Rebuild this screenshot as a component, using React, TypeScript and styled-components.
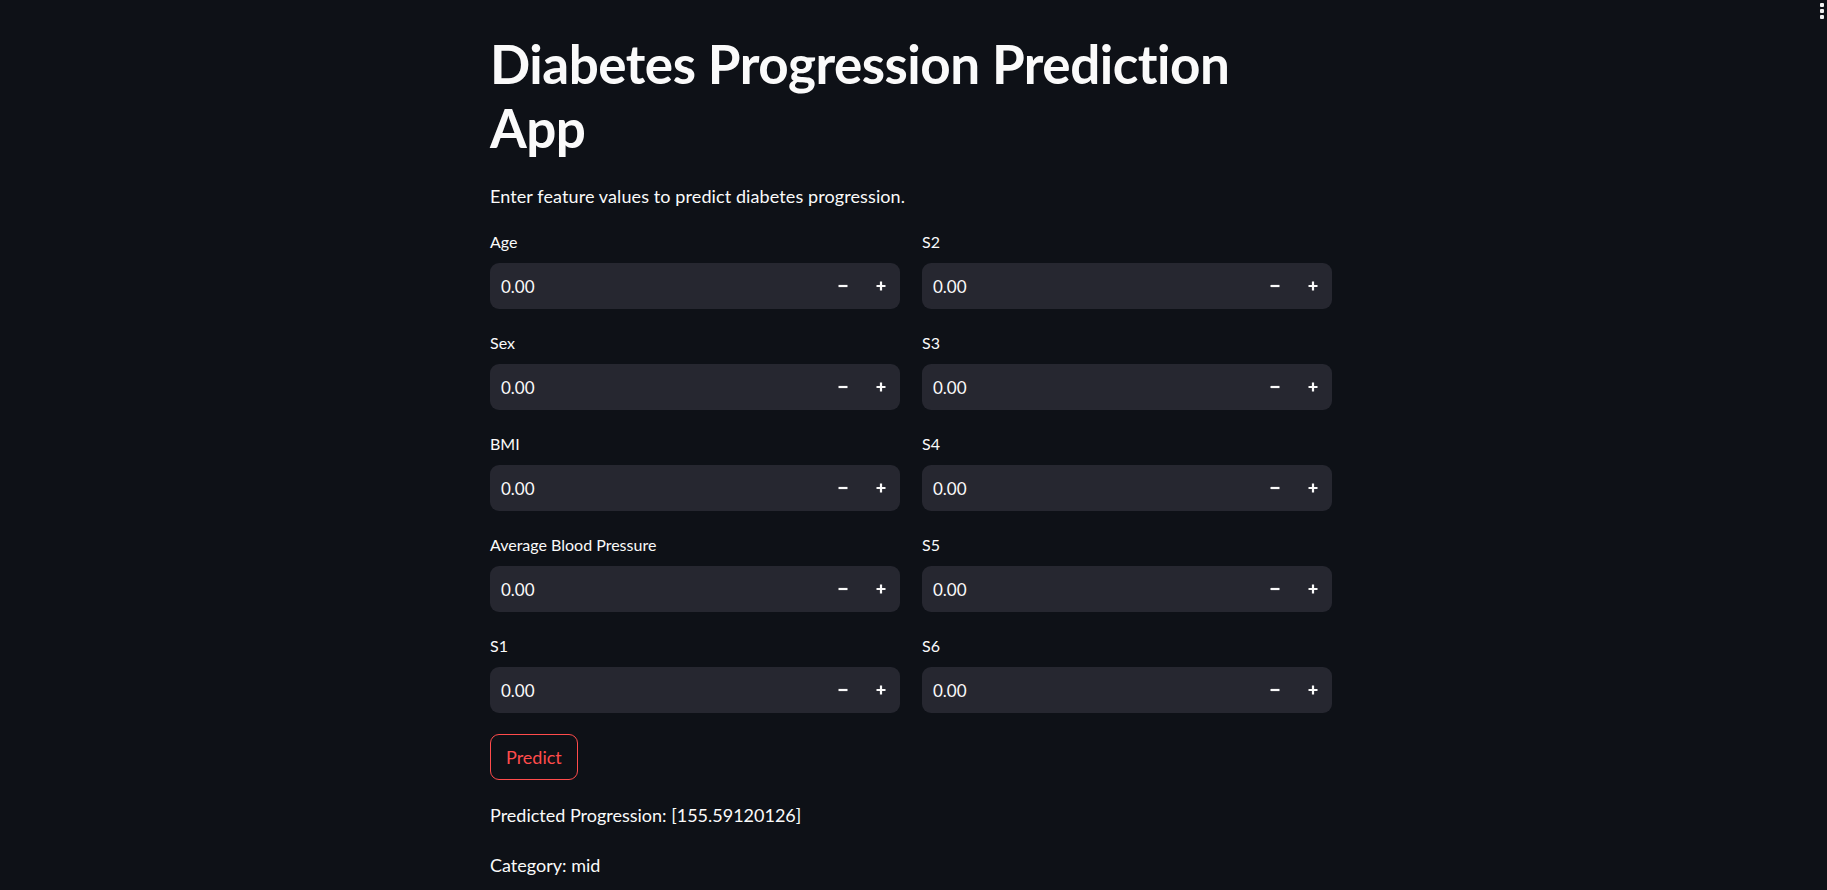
import React from "react";
import { createGlobalStyle, styled } from "styled-components";

const GlobalStyle = createGlobalStyle`
  html, body {
    margin: 0;
    padding: 0;
    background: #0e1117;
    color: #fafafa;
    font-family: "Lato", "Noto Sans", sans-serif;
  }
  * { box-sizing: border-box; }
`;

const leftFields = ["Age", "Sex", "BMI", "Average Blood Pressure", "S1"];
const rightFields = ["S2", "S3", "S4", "S5", "S6"];

const MinusIcon = () => (
  <svg width="12" height="12" viewBox="0 0 12 12">
    <path d="M1.5 6h9" stroke="#fafafa" strokeWidth="2.2" />
  </svg>
);

const PlusIcon = () => (
  <svg width="12" height="12" viewBox="0 0 12 12">
    <path d="M1.5 6h9M6 1.5v9" stroke="#fafafa" strokeWidth="2.2" />
  </svg>
);

const NumberField: React.FC<{ label: string }> = ({ label }) => (
  <Field>
    <Label>{label}</Label>
    <InputBox>
      <Value>0.00</Value>
      <StepButton aria-label="decrement">
        <MinusIcon />
      </StepButton>
      <StepButton aria-label="increment">
        <PlusIcon />
      </StepButton>
    </InputBox>
  </Field>
);

export default function App() {
  return (
    <Page>
      <GlobalStyle />
      <MenuDots aria-label="menu">
        <span />
        <span />
        <span />
      </MenuDots>
      <Main>
        <Title>
          Diabetes Progression Prediction
          <br />
          App
        </Title>
        <Text>Enter feature values to predict diabetes progression.</Text>
        <Columns>
          <Column>
            {leftFields.map((f) => (
              <NumberField key={f} label={f} />
            ))}
          </Column>
          <Column>
            {rightFields.map((f) => (
              <NumberField key={f} label={f} />
            ))}
          </Column>
        </Columns>
        <PredictButton>Predict</PredictButton>
        <Result>Predicted Progression: [155.59120126]</Result>
        <Result>Category: mid</Result>
      </Main>
    </Page>
  );
}

const Page = styled.div`
  min-height: 890px;
  background: #0e1117;
  display: flex;
  justify-content: center;
`;

const MenuDots = styled.div`
  position: absolute;
  top: 3px;
  right: 3px;
  display: flex;
  flex-direction: column;
  gap: 2px;

  span {
    display: block;
    width: 4px;
    height: 4px;
    border-radius: 1px;
    background: #f0f0f0;
  }
`;

const Main = styled.main`
  width: 847px;
  padding: 32px 5px 0 0;
`;

const Title = styled.h1`
  margin: 0;
  font-size: 53px;
  font-weight: 700;
  line-height: 64px;
  letter-spacing: -0.5px;
  color: #fafafa;
`;

const Text = styled.p`
  margin: 22px 0 0;
  font-size: 18px;
  line-height: 28px;
  letter-spacing: 0.1px;
  color: #fafafa;
`;

const Columns = styled.div`
  display: grid;
  grid-template-columns: 1fr 1fr;
  column-gap: 22px;
  margin-top: 21px;
`;

const Column = styled.div`
  display: flex;
  flex-direction: column;
`;

const Field = styled.div`
  display: flex;
  flex-direction: column;
  gap: 10px;
  margin-bottom: 23px;
`;

const Label = styled.label`
  font-size: 16px;
  line-height: 22px;
  color: #fafafa;
`;

const InputBox = styled.div`
  height: 46px;
  border-radius: 9px;
  background: #262730;
  display: flex;
  align-items: center;
  padding-left: 11px;
`;

const Value = styled.span`
  flex: 1;
  font-size: 17px;
  color: #fafafa;
`;

const StepButton = styled.button`
  appearance: none;
  border: 0;
  background: transparent;
  width: 38px;
  height: 46px;
  display: flex;
  align-items: center;
  justify-content: center;
  padding: 0;
  cursor: pointer;
`;

const PredictButton = styled.button`
  appearance: none;
  align-self: flex-start;
  height: 46px;
  padding: 0 15px;
  margin-top: -2px;
  border: 1px solid #ff4b4b;
  border-radius: 9px;
  background: transparent;
  color: #ff4b4b;
  font-family: "Lato", "Noto Sans", sans-serif;
  font-size: 18px;
  cursor: pointer;
`;

const Result = styled.p`
  margin: 21px 0 0;
  font-size: 18px;
  line-height: 29px;
  color: #fafafa;
`;
